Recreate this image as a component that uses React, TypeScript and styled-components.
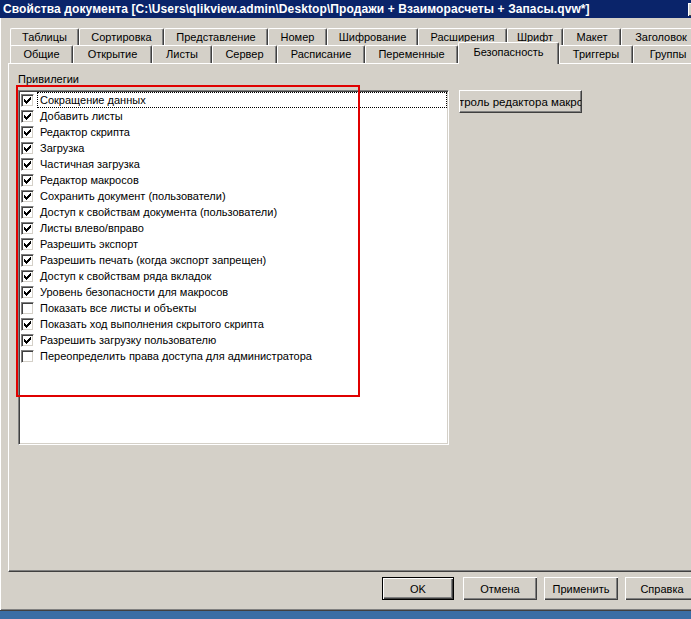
import styled, { createGlobalStyle } from "styled-components";

const GlobalStyle = createGlobalStyle`
  html, body {
    margin: 0;
    padding: 0;
    background: #3a6ea5;
  }
  body {
    font-family: "Liberation Sans", Arial, sans-serif;
    font-size: 11px;
    color: #000;
  }
  #root {
    width: 691px;
    height: 619px;
    overflow: hidden;
  }
`;

const TITLE =
  "Свойства документа [C:\\Users\\qlikview.admin\\Desktop\\Продажи + Взаиморасчеты + Запасы.qvw*]";

interface TabItem {
  label: string;
  width: number;
  active?: boolean;
}

const backTabs: TabItem[] = [
  { label: "Таблицы", width: 69 },
  { label: "Сортировка", width: 85 },
  { label: "Представление", width: 104 },
  { label: "Номер", width: 59 },
  { label: "Шифрование", width: 91 },
  { label: "Расширения", width: 89 },
  { label: "Шрифт", width: 56 },
  { label: "Макет", width: 58 },
  { label: "Заголовок", width: 80 },
];

const frontTabs: TabItem[] = [
  { label: "Общие", width: 63 },
  { label: "Открытие", width: 79 },
  { label: "Листы", width: 60 },
  { label: "Сервер", width: 65 },
  { label: "Расписание", width: 88 },
  { label: "Переменные", width: 93 },
  { label: "Безопасность", width: 101, active: true },
  { label: "Триггеры", width: 74 },
  { label: "Группы", width: 70 },
];

const privileges: { label: string; checked: boolean }[] = [
  { label: "Сокращение данных", checked: true },
  { label: "Добавить листы", checked: true },
  { label: "Редактор скрипта", checked: true },
  { label: "Загрузка", checked: true },
  { label: "Частичная загрузка", checked: true },
  { label: "Редактор макросов", checked: true },
  { label: "Сохранить документ (пользователи)", checked: true },
  { label: "Доступ к свойствам документа (пользователи)", checked: true },
  { label: "Листы влево/вправо", checked: true },
  { label: "Разрешить экспорт", checked: true },
  { label: "Разрешить печать (когда экспорт запрещен)", checked: true },
  { label: "Доступ к свойствам ряда вкладок", checked: true },
  { label: "Уровень безопасности для макросов", checked: true },
  { label: "Показать все листы и объекты", checked: false },
  { label: "Показать ход выполнения скрытого скрипта", checked: true },
  { label: "Разрешить загрузку пользователю", checked: true },
  { label: "Переопределить права доступа для администратора", checked: false },
];

// classic 7x7 check glyph, one char per pixel
const CHECK_PIXELS = [
  "......#",
  ".....##",
  "#...###",
  "##.###.",
  "#####..",
  ".###...",
  "..#....",
];

function CheckMark() {
  return (
    <svg width="7" height="7" viewBox="0 0 7 7" shapeRendering="crispEdges">
      {CHECK_PIXELS.flatMap((row, y) =>
        row
          .split("")
          .map((c, x) =>
            c === "#" ? <rect key={`${x}-${y}`} x={x} y={y} width="1" height="1" fill="#000" /> : null
          )
      )}
    </svg>
  );
}

function App(): JSX.Element {
  return (
    <>
      <GlobalStyle />
      <Window>
        <TitleBar>
          <Title>{TITLE}</Title>
          <ControlButton />
        </TitleBar>
        <Body>
          <TabStrip>
            <TabRow $height={18}>
              {backTabs.map((t) => (
                <Tab key={t.label} $width={t.width}>
                  {t.label}
                </Tab>
              ))}
            </TabRow>
            <TabRow $height={17}>
              {frontTabs.map((t) => (
                <Tab key={t.label} $width={t.width} $active={t.active}>
                  {t.label}
                </Tab>
              ))}
            </TabRow>
          </TabStrip>
          <Panel>
            <GroupLabel>Привилегии</GroupLabel>
            <Content>
              <ListBox>
                {privileges.map((p, i) => (
                  <ListItem key={p.label}>
                    <CheckBox>{p.checked && <CheckMark />}</CheckBox>
                    <ItemLabel $focused={i === 0}>{p.label}</ItemLabel>
                  </ListItem>
                ))}
              </ListBox>
              <SideButton>
                <span>Контроль редактора макросов</span>
              </SideButton>
            </Content>
            <Highlight />
          </Panel>
          <ButtonBar>
            <DialogButton $default>OK</DialogButton>
            <DialogButton>Отмена</DialogButton>
            <DialogButton>Применить</DialogButton>
            <DialogButton>Справка</DialogButton>
          </ButtonBar>
        </Body>
      </Window>
    </>
  );
}

export default App;

const Window = styled.div`
  box-sizing: border-box;
  width: 708px;
  height: 611px;
  background: #d4d0c8;
  border-bottom: 1px solid #404040;
  box-shadow: inset 0 -1px #808080;
  display: flex;
  flex-direction: column;
`;

const TitleBar = styled.div`
  height: 18px;
  background: #0a246a;
  display: flex;
  align-items: center;
  padding-left: 3px;
`;

const Title = styled.div`
  color: #fff;
  font-weight: bold;
  font-size: 12px;
  white-space: nowrap;
  letter-spacing: 0.1px;
`;

const ControlButton = styled.div`
  margin-left: auto;
  margin-right: 4px;
  width: 16px;
  height: 13px;
  background: #d4d0c8;
  box-shadow: inset 1px 1px #fff, inset -1px -1px #404040;
`;

const Body = styled.div`
  flex: 1;
  display: flex;
  flex-direction: column;
  padding-left: 8px;
  box-shadow: inset 1px 0 #fff;
`;

const TabStrip = styled.div`
  margin-top: 10px;
  padding-left: 2px;
  display: flex;
  flex-direction: column;
`;

const TabRow = styled.div<{ $height: number }>`
  display: flex;
  align-items: flex-end;
  height: ${(p) => p.$height}px;
`;

const Tab = styled.div<{ $width: number; $active?: boolean }>`
  box-sizing: border-box;
  flex: none;
  width: ${(p) => p.$width}px;
  height: ${(p) => (p.$active ? 22 : 18)}px;
  margin-bottom: ${(p) => (p.$active ? -1 : 0)}px;
  padding-bottom: ${(p) => (p.$active ? 3 : 1)}px;
  position: relative;
  z-index: ${(p) => (p.$active ? 2 : 1)};
  background: #d4d0c8;
  border-top: 1px solid #fff;
  border-left: 1px solid #fff;
  border-right: 1px solid #404040;
  border-radius: 2px 2px 0 0;
  box-shadow: inset -1px 0 #808080;
  display: flex;
  align-items: center;
  justify-content: center;
  white-space: nowrap;
  overflow: hidden;
`;

const Panel = styled.div`
  position: relative;
  box-sizing: border-box;
  height: 509px;
  padding: 8px 0 0 9px;
  border-top: 1px solid #fff;
  border-left: 1px solid #fff;
  border-bottom: 1px solid #404040;
  box-shadow: inset 0 -1px #808080;
`;

const GroupLabel = styled.div`
  height: 14px;
  line-height: 14px;
`;

const Content = styled.div`
  margin-top: 4px;
  display: flex;
  align-items: flex-start;
  gap: 10px;
`;

const ListBox = styled.div`
  box-sizing: border-box;
  width: 431px;
  height: 355px;
  background: #fff;
  border-top: 1px solid #808080;
  border-left: 1px solid #808080;
  border-right: 1px solid #fff;
  border-bottom: 1px solid #fff;
  box-shadow: inset 1px 1px #404040, inset -1px -1px #d4d0c8;
  padding: 1px 1px 0 2px;
  display: flex;
  flex-direction: column;
`;

const ListItem = styled.div`
  height: 16px;
  display: flex;
  align-items: center;
`;

const CheckBox = styled.div`
  box-sizing: border-box;
  flex: none;
  width: 13px;
  height: 13px;
  background: #fff;
  border-top: 1px solid #808080;
  border-left: 1px solid #808080;
  border-right: 1px solid #fff;
  border-bottom: 1px solid #fff;
  box-shadow: inset 1px 1px #404040, inset -1px -1px #d4d0c8;
  display: flex;
  align-items: center;
  justify-content: center;
`;

const ItemLabel = styled.div<{ $focused?: boolean }>`
  box-sizing: border-box;
  flex: 1;
  height: 16px;
  margin-left: 3px;
  padding-left: 2px;
  line-height: 14px;
  border: 1px ${(p) => (p.$focused ? "dotted #000" : "solid transparent")};
  white-space: nowrap;
`;

const SideButton = styled.div`
  box-sizing: border-box;
  flex: none;
  width: 123px;
  height: 23px;
  overflow: hidden;
  display: flex;
  align-items: center;
  justify-content: center;
  white-space: nowrap;
  border-top: 1px solid #fff;
  border-left: 1px solid #fff;
  border-right: 1px solid #404040;
  border-bottom: 1px solid #404040;
  box-shadow: inset -1px -1px #808080;
  font-size: 11.5px;

  span {
    flex: none;
  }
`;

const Highlight = styled.div`
  position: absolute;
  left: 7px;
  top: 21px;
  width: 344px;
  height: 312px;
  box-sizing: border-box;
  border: 2px solid #e00000;
  pointer-events: none;
`;

const ButtonBar = styled.div`
  margin-top: 5px;
  padding-left: 374px;
  display: flex;
  gap: 7px;
`;

const DialogButton = styled.div<{ $default?: boolean }>`
  box-sizing: border-box;
  flex: none;
  width: ${(p) => (p.$default ? 72 : 74)}px;
  margin-right: ${(p) => (p.$default ? 2 : 0)}px;
  height: 23px;
  display: flex;
  align-items: center;
  justify-content: center;
  border: ${(p) => (p.$default ? "1px solid #000" : "none")};
  box-shadow: inset 1px 1px #fff, inset -1px -1px #404040, inset -2px -2px #808080;
  white-space: nowrap;
`;
